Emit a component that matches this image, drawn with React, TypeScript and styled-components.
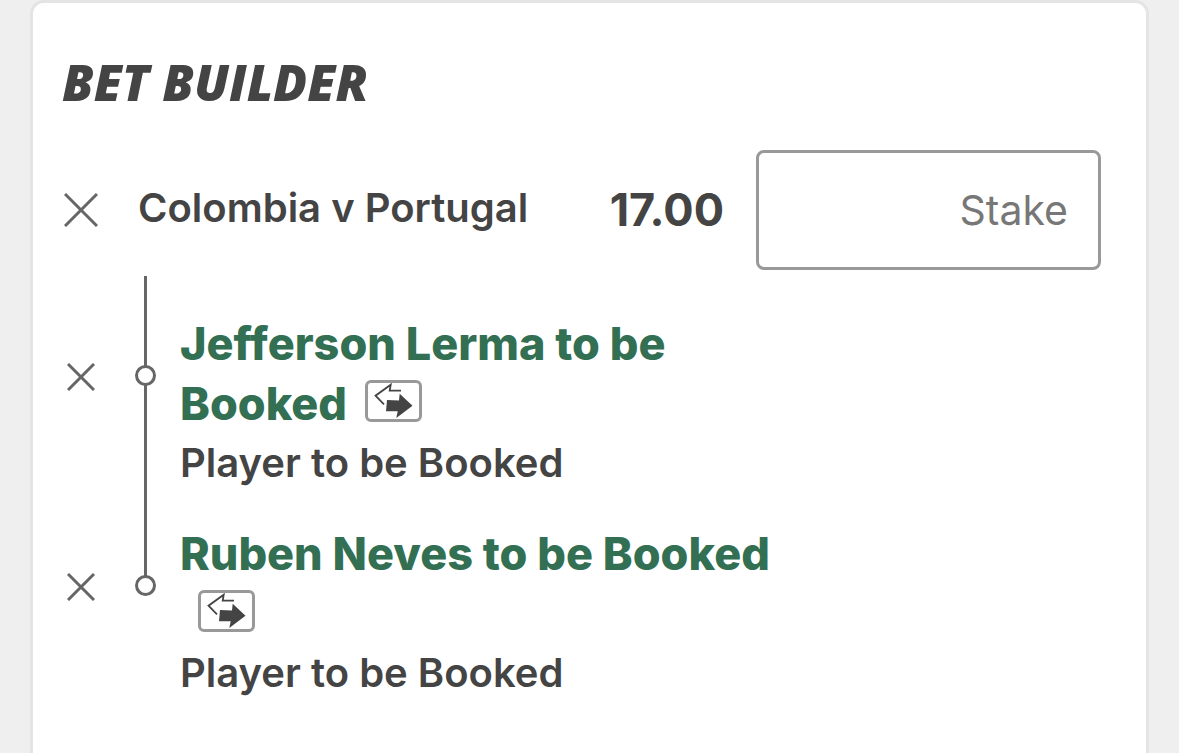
import React from "react";
import styled, { createGlobalStyle } from "styled-components";

const GlobalStyle = createGlobalStyle`
  * { box-sizing: border-box; }
  body { margin: 0; background: #efefef; color: #444; font-family: Inter, "Liberation Sans", sans-serif; }
`;
const Page = styled.main`
  min-height: 100vh;
  display: flex;
  padding: 0 30px;
`;
const Slip = styled.section`
  flex: 1;
  border: 3px solid #e4e4e4;
  border-bottom: 0;
  border-radius: 14px 14px 0 0;
  background: #fff;
  padding: 51px 45px 0 29px;
`;
const Title = styled.h1`
  margin: 0;
  font: italic 800 50px/56px "Open Sans", sans-serif;
  text-transform: uppercase;
`;
const Fixture = styled.div`
  display: flex;
  align-items: center;
  margin-top: 40px;
`;
const RemoveButton = styled.button`
  width: 38px;
  height: 38px;
  padding: 0;
  border: 0;
  background: none;
  color: #666;
  display: grid;
  place-items: center;
`;
const FixtureName = styled.h2`
  flex: 1;
  margin: 0 0 0 38px;
  padding-bottom: 4px;
  font-size: 40px;
  line-height: 48px;
  font-weight: 600;
`;
const Odds = styled.span`
  font-size: 45px;
  line-height: 48px;
  font-weight: 700;
`;
const StakeInput = styled.input`
  width: 345px;
  height: 120px;
  margin-left: 32px;
  padding: 0 30px;
  border: 3px solid #999;
  border-radius: 8px;
  background: #fff;
  font: 400 41px/48px Inter, sans-serif;
  text-align: right;
  &::placeholder { color: #777; opacity: 1; }
`;
const Selections = styled.ul`
  margin: 6px 0 0;
  padding: 0;
  list-style: none;
`;
const Selection = styled.li`
  display: grid;
  grid-template-columns: 38px 80px minmax(0, 600px);
`;
const RemoveCell = styled.div`
  padding-top: 82px;
`;
const Track = styled.svg`
  display: block;
  margin-left: 35px;
`;
const Details = styled.div`
  padding-top: 38px;
`;
const Name = styled.h3`
  margin: 0;
  color: #326f53;
  font-size: 45px;
  line-height: 60px;
  font-weight: 800;
`;
const SwapButton = styled.button`
  width: 57px;
  height: 42px;
  margin-left: 18px;
  padding: 0;
  border: 3px solid #999;
  border-radius: 6px;
  background: #fff;
  color: #444;
  display: inline-grid;
  vertical-align: 1px;
`;
const Market = styled.p`
  margin: 6px 0 0;
  font-size: 40px;
  line-height: 46px;
  font-weight: 600;
`;

function Cross({ size }: { size: number }) {
  const end = size - 1;
  return (
    <svg width={size} height={size} viewBox={`0 0 ${size} ${size}`} aria-hidden="true">
      <path d={`M1 1 ${end} ${end}M${end} 1 1 ${end}`} stroke="currentColor" strokeWidth="3" />
    </svg>
  );
}

function Swap() {
  return (
    <svg width="51" height="36" viewBox="0 0 51 36" aria-hidden="true">
      <path d="M33 7.7H21.7L22.7 1.7 7.5 12.7 16 21.3" fill="none" stroke="currentColor" strokeWidth="1.8" />
      <path d="M19 17 31 17.5 31.7 10.7 44.5 22.7 28.3 35 29.7 28.3H18Z" fill="currentColor" />
    </svg>
  );
}

const selections = ["Jefferson Lerma to be Booked", "Ruben Neves to be Booked"];

export default function App() {
  return (
    <>
      <GlobalStyle />
      <Page>
        <Slip>
          <Title>Bet Builder</Title>
          <Fixture>
            <RemoveButton aria-label="Remove bet"><Cross size={34} /></RemoveButton>
            <FixtureName>Colombia v Portugal</FixtureName>
            <Odds>17.00</Odds>
            <StakeInput aria-label="Stake" placeholder="Stake" />
          </Fixture>
          <Selections>
            {selections.map((name, index) => (
              <Selection key={name}>
                <RemoveCell>
                  <RemoveButton aria-label={`Remove ${name}`}><Cross size={28} /></RemoveButton>
                </RemoveCell>
                <Track width="21" height="210" viewBox="0 0 21 210" aria-hidden="true">
                  <path
                    d={index < selections.length - 1 ? "M10.5 0V90M10.5 109V210" : "M10.5 0V90"}
                    stroke="#666"
                    strokeWidth="3"
                  />
                  <circle cx="10.5" cy="99.5" r="9" fill="none" stroke="#666" strokeWidth="3" />
                </Track>
                <Details>
                  <Name>{name}<SwapButton aria-label={`Swap ${name}`}><Swap /></SwapButton></Name>
                  <Market>Player to be Booked</Market>
                </Details>
              </Selection>
            ))}
          </Selections>
        </Slip>
      </Page>
    </>
  );
}
